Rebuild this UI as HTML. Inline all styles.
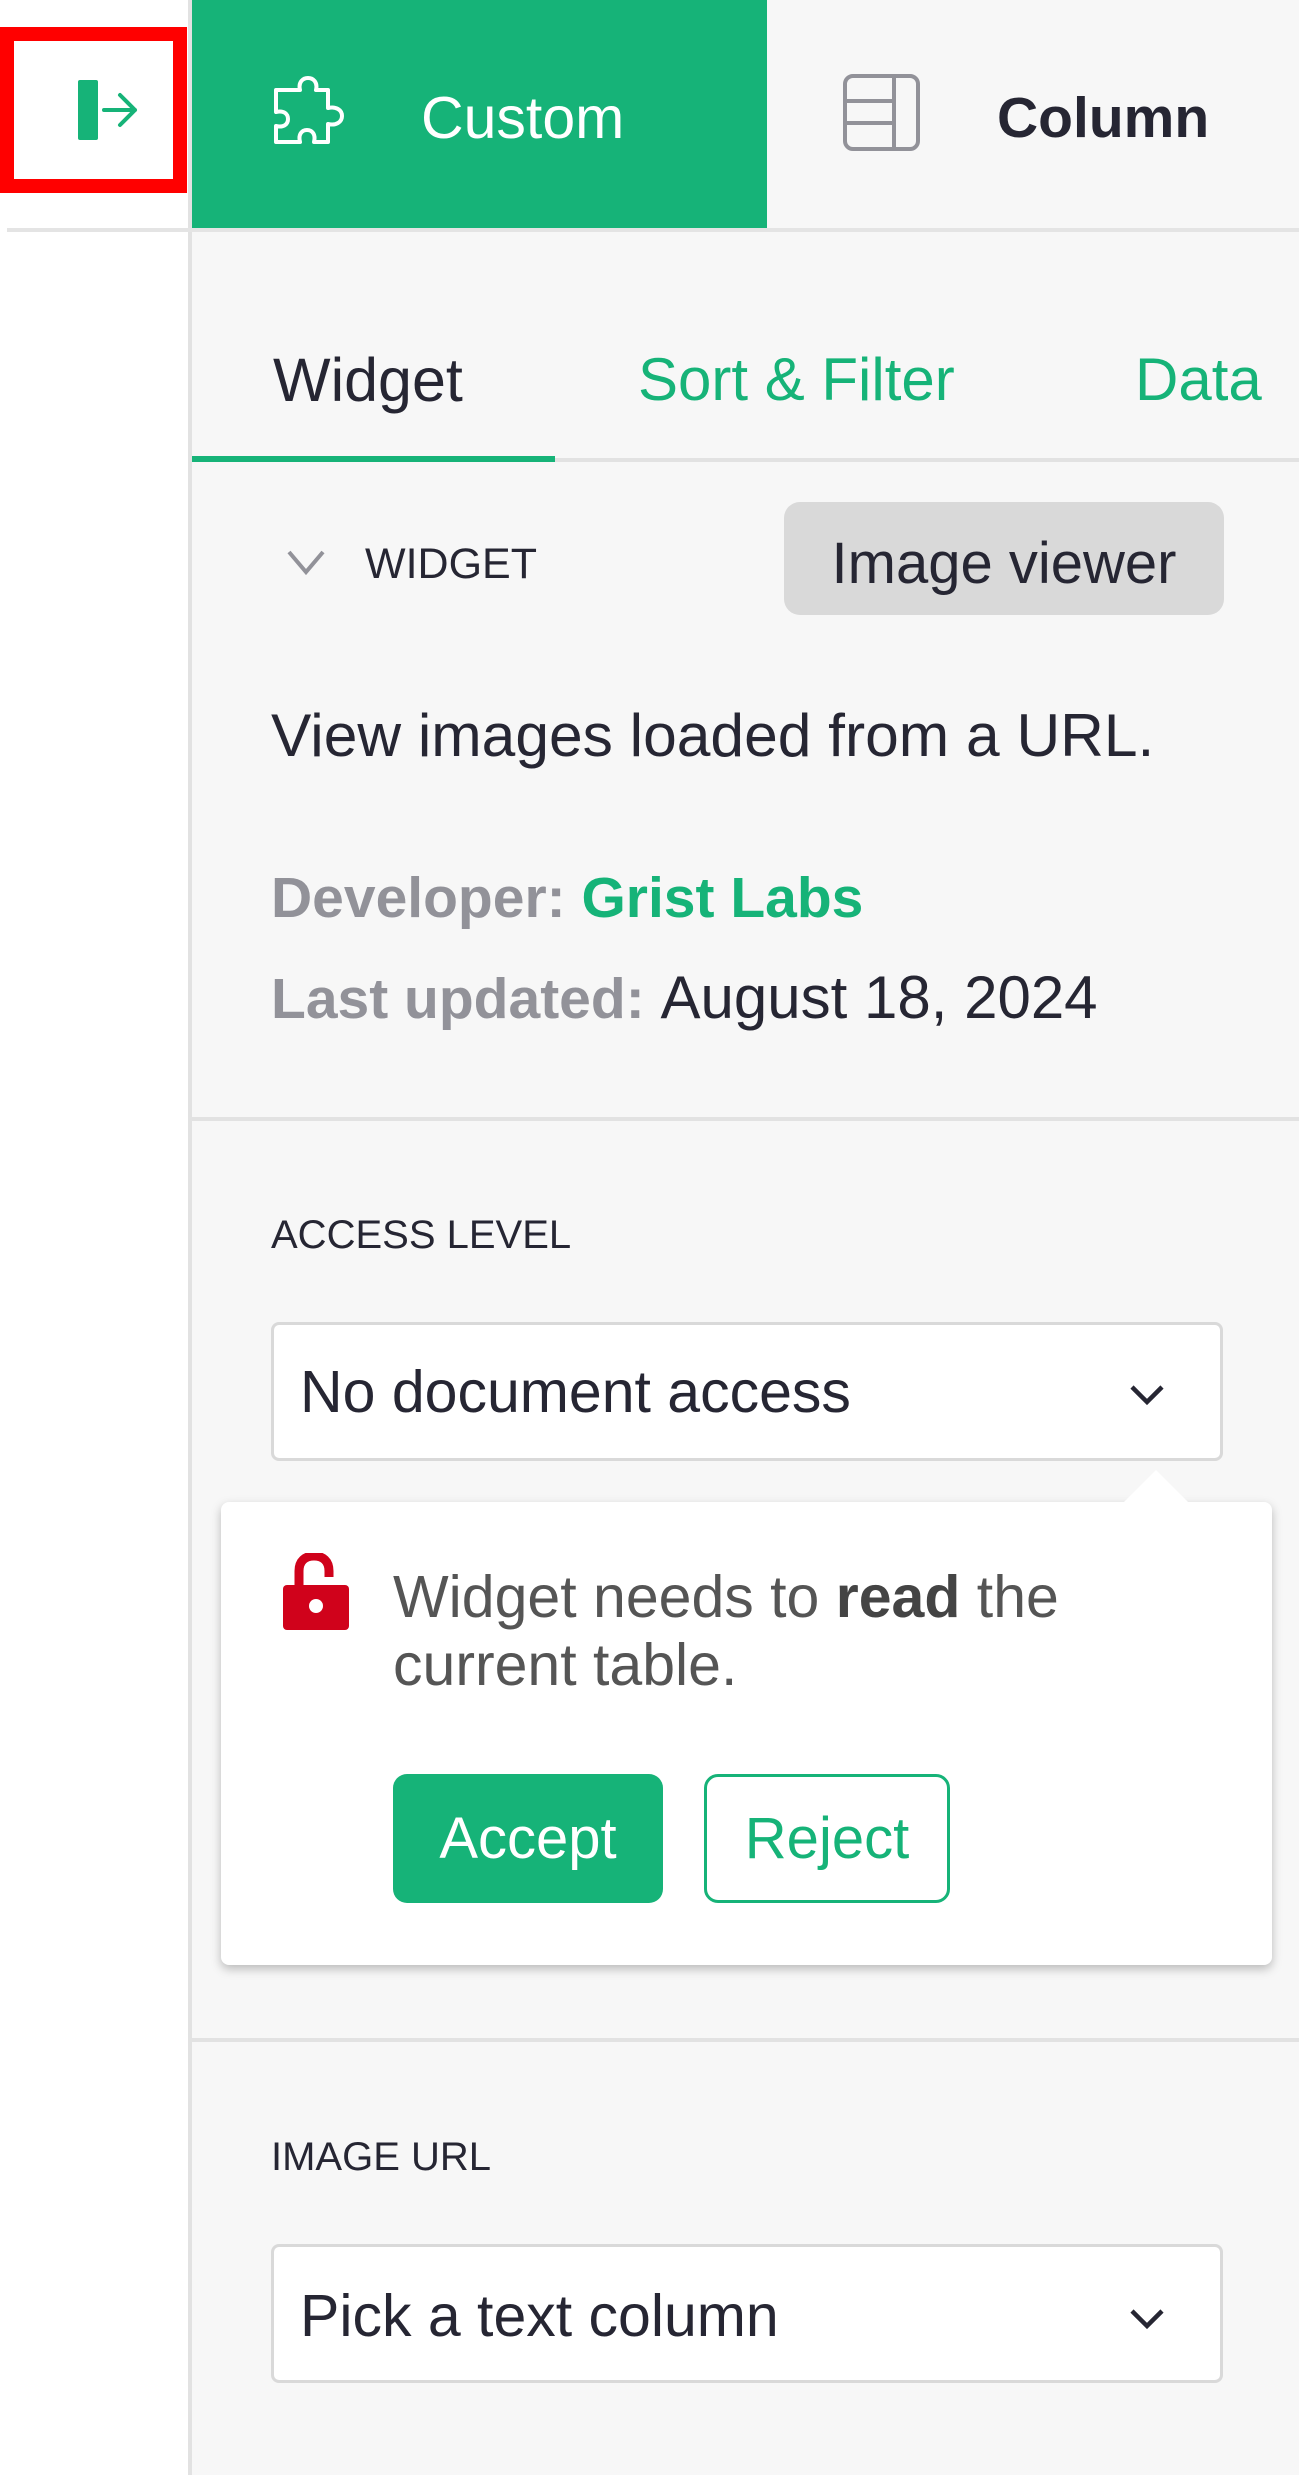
<!DOCTYPE html>
<html><head><meta charset="utf-8"><style>
*{margin:0;padding:0;box-sizing:border-box}
body{width:1299px;height:2475px;background:#fff;position:relative;overflow:hidden;font-family:"Liberation Sans",sans-serif;color:#262633}
.a{position:absolute;white-space:nowrap}
</style></head><body>
<div class="a" style="left:190px;top:0;width:1109px;height:2475px;background:#f7f7f7"></div>
<div class="a" style="left:188px;top:0;width:4px;height:2475px;background:#e2e2e2"></div>
<div class="a" style="left:7px;top:228px;width:1292px;height:4px;background:#e4e4e4"></div>
<!-- red box -->
<div class="a" style="left:0;top:27px;width:187px;height:166px;border:14px solid #ff0000;background:#fff"></div>
<div class="a" style="left:78px;top:80px;width:20px;height:60px;background:#16b378;border-radius:2px"></div>
<svg class="a" style="left:100px;top:88px" width="42" height="46" viewBox="0 0 42 46"><path d="M4 22H35M20 7L35 22L20 37" fill="none" stroke="#16b378" stroke-width="4" stroke-linecap="round" stroke-linejoin="round"/></svg>
<!-- Custom tab -->
<div class="a" style="left:192px;top:0;width:575px;height:228px;background:#16b378"></div>
<svg class="a" style="left:270px;top:76px" width="78" height="80" viewBox="0 0 78 80"><path d="M20 14H30C28 6 33 2 38 2C43 2 48 6 46 14H58V32C66 30 72 34 72 40C72 46 66 50 58 48V66H44C46 58 42 54 37 54C32 54 28 58 30 66H6V50C14 52 18 48 18 43C18 38 14 34 6 36V14Z" fill="none" stroke="#fff" stroke-width="4" stroke-linejoin="round"/></svg>
<div class="a" style="left:421px;top:86px;font-size:59px;line-height:64px;color:#fff">Custom</div>
<svg class="a" style="left:843px;top:74px" width="78" height="78" viewBox="0 0 78 78"><rect x="2" y="2" width="73" height="73" rx="8" fill="none" stroke="#929299" stroke-width="4"/><path d="M51 2V75M2 27H51M2 49H51" stroke="#929299" stroke-width="4"/></svg>
<div class="a" style="left:997px;top:86px;font-size:57px;line-height:64px;font-weight:bold;color:#262633">Column</div>
<!-- tabs -->
<div class="a" style="left:192px;top:458px;width:1107px;height:4px;background:#e2e2e2"></div>
<div class="a" style="left:192px;top:456px;width:363px;height:6px;background:#16b378"></div>
<div class="a" style="left:273px;top:348px;font-size:61px;line-height:64px">Widget</div>
<div class="a" style="left:638px;top:348px;font-size:60px;line-height:64px;color:#16b378">Sort &amp; Filter</div>
<div class="a" style="left:1135px;top:348px;font-size:60px;line-height:64px;color:#16b378">Data</div>
<!-- widget header -->
<svg class="a" style="left:286px;top:548px" width="40" height="28" viewBox="0 0 40 28"><path d="M3 4L20 24L37 4" fill="none" stroke="#929299" stroke-width="4"/></svg>
<div class="a" style="left:365px;top:540px;font-size:43px;line-height:48px">WIDGET</div>
<div class="a" style="left:784px;top:502px;width:440px;height:113px;background:#d9d9d9;border-radius:16px"></div>
<div class="a" style="left:784px;top:532px;width:440px;text-align:center;font-size:58px;line-height:64px">Image viewer</div>
<div class="a" style="left:271px;top:703px;font-size:60.5px;line-height:64px">View images loaded from a URL.</div>
<div class="a" style="left:271px;top:866px;font-size:57px;line-height:64px;font-weight:bold;color:#929299">Developer: <span style="color:#16b378">Grist Labs</span></div>
<div class="a" style="left:271px;top:966px;font-size:57px;line-height:64px;color:#262633"><b style="color:#929299">Last updated:</b> <span style="font-size:60px">August 18, 2024</span></div>
<div class="a" style="left:192px;top:1117px;width:1107px;height:4px;background:#e2e2e2"></div>
<div class="a" style="left:271px;top:1212px;font-size:40px;line-height:46px">ACCESS LEVEL</div>
<div class="a" style="left:271px;top:1322px;width:952px;height:139px;background:#fff;border:3px solid #d9d9d9;border-radius:8px"></div>
<div class="a" style="left:300px;top:1360px;font-size:59px;line-height:64px">No document access</div>
<svg class="a" style="left:1128px;top:1382px" width="38" height="26" viewBox="0 0 38 26"><path d="M4 5L19 20L34 5" fill="none" stroke="#262633" stroke-width="4.5"/></svg>
<!-- popup -->
<div class="a" style="left:221px;top:1502px;width:1051px;height:463px;background:#fff;border-radius:8px;box-shadow:0 4px 10px rgba(0,0,0,0.25)"></div>
<div class="a" style="left:1122px;top:1470px;width:0;height:0;border-left:34px solid transparent;border-right:34px solid transparent;border-bottom:34px solid #fff"></div>
<svg class="a" style="left:281px;top:1553px" width="70" height="78" viewBox="0 0 70 78"><path d="M18 32V18C18 8 24 3 33 3C42 3 48 8 48 18V24" fill="none" stroke="#d0021b" stroke-width="9"/><rect x="2" y="32" width="66" height="45" rx="4" fill="#d0021b"/><circle cx="35" cy="53" r="7" fill="#fff"/></svg>
<div class="a" style="left:393px;top:1563px;font-size:59px;line-height:68px;color:#555">Widget needs to <b style="color:#444">read</b> the<br>current table.</div>
<div class="a" style="left:393px;top:1774px;width:270px;height:129px;background:#16b378;border-radius:14px;color:#fff;font-size:58px;line-height:129px;text-align:center">Accept</div>
<div class="a" style="left:704px;top:1774px;width:246px;height:129px;border:3px solid #16b378;border-radius:14px;color:#16b378;font-size:58px;line-height:123px;text-align:center;background:#fff">Reject</div>
<div class="a" style="left:192px;top:2038px;width:1107px;height:4px;background:#e2e2e2"></div>
<div class="a" style="left:271px;top:2134px;font-size:40px;line-height:46px">IMAGE URL</div>
<div class="a" style="left:271px;top:2244px;width:952px;height:139px;background:#fff;border:3px solid #d9d9d9;border-radius:8px"></div>
<div class="a" style="left:300px;top:2284px;font-size:59px;line-height:64px">Pick a text column</div>
<svg class="a" style="left:1128px;top:2306px" width="38" height="26" viewBox="0 0 38 26"><path d="M4 5L19 20L34 5" fill="none" stroke="#262633" stroke-width="4.5"/></svg>
</body></html>
